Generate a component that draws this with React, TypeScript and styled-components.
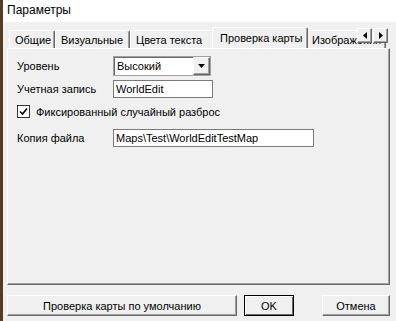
import React from 'react';
import styled, { createGlobalStyle } from 'styled-components';

const GlobalStyle = createGlobalStyle`
  html, body {
    margin: 0;
    padding: 0;
    background: #f0f0f0;
  }
  * {
    box-sizing: border-box;
  }
`;

const Window = styled.div`
  width: 396px;
  height: 321px;
  background: #f0f0f0;
  border-left: 3px solid #5b3a1f;
  font-family: 'Liberation Sans', Arial, sans-serif;
  font-size: 11px;
  color: #000;
  display: flex;
  flex-direction: column;
  overflow: hidden;
`;

const TitleBar = styled.div`
  height: 22px;
  background: #fff;
  padding-left: 4px;
  padding-bottom: 2px;
  display: flex;
  align-items: center;
  font-size: 12px;
  color: #000;
`;

const Body = styled.div`
  padding: 5px 6px 0 4px;
  display: flex;
  flex-direction: column;
`;

const TabRow = styled.div`
  position: relative;
  height: 21px;
  display: flex;
  align-items: flex-end;
  padding-left: 2px;
  overflow: hidden;
`;

const Tab = styled.div<{ $w: number; $active?: boolean }>`
  flex: none;
  width: ${({ $w }) => $w}px;
  height: ${({ $active }) => ($active ? 21 : 18)}px;
  margin: ${({ $active }) => ($active ? '0 -2px 0 -2px' : '0')};
  padding: ${({ $active }) => ($active ? '3px 0 0 7px' : '2px 0 0 5px')};
  background: #f0f0f0;
  border-top: 1px solid #fff;
  border-left: 1px solid #fff;
  border-right: 1px solid #696969;
  box-shadow: inset -1px 0 0 #a0a0a0;
  border-radius: 2px 2px 0 0;
  position: relative;
  z-index: ${({ $active }) => ($active ? 2 : 1)};
  white-space: nowrap;
  overflow: hidden;
  line-height: 14px;
`;

const ScrollButtons = styled.div`
  position: absolute;
  right: 2px;
  top: 1px;
  display: flex;
  gap: 1px;
  z-index: 3;
  background: #f0f0f0;
`;

const ScrollButton = styled.div`
  width: 15px;
  height: 15px;
  background: #f0f0f0;
  border-top: 1px solid #fff;
  border-left: 1px solid #fff;
  border-right: 1px solid #696969;
  border-bottom: 1px solid #696969;
  box-shadow: inset -1px -1px 0 #a0a0a0;
  display: flex;
  align-items: center;
  justify-content: center;
`;

const Panel = styled.div`
  height: 237px;
  border-top: 1px solid #fff;
  border-left: 1px solid #fff;
  border-right: 1px solid #696969;
  border-bottom: 1px solid #696969;
  box-shadow: inset -1px -1px 0 #a0a0a0;
  padding: 7px 0 0 9px;
  display: flex;
  flex-direction: column;
`;

const FieldRow = styled.div<{ $mt?: number }>`
  display: grid;
  grid-template-columns: 96px auto;
  align-items: center;
  margin-top: ${({ $mt }) => $mt ?? 0}px;
`;

const Label = styled.span`
  white-space: nowrap;
`;

const Select = styled.div`
  width: 98px;
  height: 20px;
  background: #fff;
  border: 1px solid #a0a0a0;
  box-shadow: inset 1px 1px 0 #696969;
  display: flex;
  align-items: center;
  padding-left: 3px;
  justify-content: space-between;
`;

const DropButton = styled.div`
  width: 17px;
  height: 18px;
  background: #f0f0f0;
  border-top: 1px solid #fff;
  border-left: 1px solid #fff;
  border-right: 1px solid #696969;
  border-bottom: 1px solid #696969;
  box-shadow: inset -1px -1px 0 #a0a0a0;
  display: flex;
  align-items: center;
  justify-content: center;
`;

const TextInput = styled.div<{ $w: number }>`
  width: ${({ $w }) => $w}px;
  height: 18px;
  background: #fff;
  border: 1px solid #7a7a7a;
  display: flex;
  align-items: center;
  padding-left: 2px;
  white-space: nowrap;
`;

const CheckRow = styled.div`
  display: flex;
  align-items: center;
  gap: 6px;
  margin-top: 7px;
`;

const CheckBox = styled.div`
  width: 13px;
  height: 13px;
  background: #fff;
  border: 1px solid #333;
  display: flex;
  align-items: center;
  justify-content: center;
`;

const ButtonRow = styled.div`
  display: flex;
  margin-top: 10px;
`;

const Button = styled.div<{ $w: number; $default?: boolean; $ml?: number }>`
  width: ${({ $w }) => $w}px;
  height: 21px;
  margin-left: ${({ $ml }) => $ml ?? 0}px;
  background: #f0f0f0;
  border-top: 1px solid ${({ $default }) => ($default ? '#000' : '#fff')};
  border-left: 1px solid ${({ $default }) => ($default ? '#000' : '#fff')};
  border-right: 1px solid ${({ $default }) => ($default ? '#000' : '#696969')};
  border-bottom: 1px solid ${({ $default }) => ($default ? '#000' : '#696969')};
  box-shadow: ${({ $default }) =>
    $default
      ? 'inset 1px 1px 0 #fff, inset -1px -1px 0 #696969'
      : 'inset -1px -1px 0 #a0a0a0'};
  display: flex;
  align-items: center;
  justify-content: center;
  white-space: nowrap;
`;

const Arrow = ({ dir }: { dir: 'down' | 'left' | 'right' }) => {
  const pts = dir === 'down' ? '0,0 7,0 3.5,4' : dir === 'left' ? '4,0 4,7 0,3.5' : '0,0 0,7 4,3.5';
  const w = dir === 'down' ? 7 : 4;
  const h = dir === 'down' ? 4 : 7;
  return (
    <svg width={w} height={h} viewBox={`0 0 ${w} ${h}`}>
      <polygon points={pts} fill="#000" />
    </svg>
  );
};

export default function App() {
  return (
    <>
      <GlobalStyle />
      <Window>
        <TitleBar>Параметры</TitleBar>
        <Body>
          <TabRow>
            <Tab $w={46}>Общие</Tab>
            <Tab $w={75}>Визуальные</Tab>
            <Tab $w={84}>Цвета текста</Tab>
            <Tab $w={96} $active>
              Проверка карты
            </Tab>
            <Tab $w={80}>Изображения</Tab>
            <ScrollButtons>
              <ScrollButton>
                <Arrow dir="left" />
              </ScrollButton>
              <ScrollButton>
                <Arrow dir="right" />
              </ScrollButton>
            </ScrollButtons>
          </TabRow>
          <Panel>
            <FieldRow>
              <Label>Уровень</Label>
              <Select>
                <span>Высокий</span>
                <DropButton>
                  <Arrow dir="down" />
                </DropButton>
              </Select>
            </FieldRow>
            <FieldRow $mt={4}>
              <Label>Учетная запись</Label>
              <TextInput $w={100}>WorldEdit</TextInput>
            </FieldRow>
            <CheckRow>
              <CheckBox>
                <svg width="9" height="9" viewBox="0 0 9 9">
                  <path d="M1 4.5 L3.5 7 L8 1.5" stroke="#000" strokeWidth="1.6" fill="none" />
                </svg>
              </CheckBox>
              <Label>Фиксированный случайный разброс</Label>
            </CheckRow>
            <FieldRow $mt={11}>
              <Label>Копия файла</Label>
              <TextInput $w={201}>Maps\Test\WorldEditTestMap</TextInput>
            </FieldRow>
          </Panel>
          <ButtonRow>
            <Button $w={230}>Проверка карты по умолчанию</Button>
            <Button $w={50} $ml={7} $default>
              OK
            </Button>
            <Button $w={68} $ml={28}>
              Отмена
            </Button>
          </ButtonRow>
        </Body>
      </Window>
    </>
  );
}
